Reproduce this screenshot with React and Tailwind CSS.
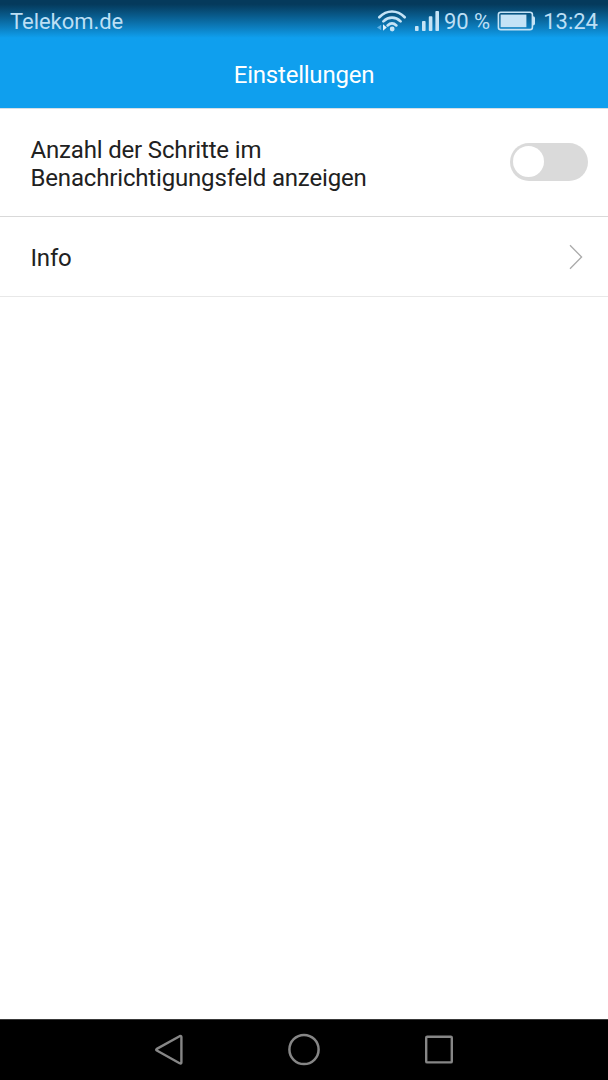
function WifiIcon() {
    return (
        <svg width="34" height="24" viewBox="0 0 34 24" fill="none">
            <g stroke="#c5e3f6" strokeWidth="2.7">
                <path d="M4.3 8.2C11.8 .6 22.2 .6 29.7 8.2" strokeLinecap="round" />
                <path d="M8.4 12.4C13.6 7.4 20.4 7.4 25.6 12.4" strokeLinecap="round" />
                <path d="M12.6 16.4C15.4 13.8 18.6 13.8 21.4 16.4" strokeLinecap="round" />
            </g>
            <circle cx="17.2" cy="20" r="2.4" fill="#c5e3f6" />
            <path d="M6.2 15.8V21.2L2 18.5Z" fill="#5fb0e2" />
            <path d="M8 15.2V21.8L11.8 18.5Z" fill="#e2f2fc" />
        </svg>
    );
}

function SignalIcon() {
    return (
        <svg width="24" height="20" viewBox="0 0 24 20" fill="#c5e3f6">
            <rect x="0" y="15" width="3.6" height="5" rx="0.8" />
            <rect x="7" y="10" width="3.6" height="10" rx="0.8" />
            <rect x="13.8" y="5.2" width="3.6" height="14.8" rx="0.8" />
            <rect x="20.4" y="0" width="3.6" height="20" rx="0.8" />
        </svg>
    );
}

function BatteryIcon() {
    return (
        <svg width="38" height="20" viewBox="0 0 38 20" fill="none">
            <rect x="1.4" y="1.2" width="34" height="17.4" rx="2.4" stroke="#c5e3f6" strokeWidth="1.6" />
            <rect x="3.6" y="3.6" width="25.8" height="12.6" fill="#c5e3f6" />
            <path d="M36 5.2Q38 5.4 38 7V12.6Q38 14.4 36 14.6Z" fill="#c5e3f6" />
        </svg>
    );
}

export function StatusBar() {
    return (
        <div className="flex h-[42px] items-center bg-linear-to-b from-[#053a5c] from-10% to-[#0f9fee] to-90% px-[10px] text-[22px] leading-none text-[#bcdff5]">
            <span className="pt-px tracking-[-0.05px]">Telekom.de</span>
            <div className="ml-auto flex items-center">
                <WifiIcon />
                <div className="ml-[6px]">
                    <SignalIcon />
                </div>
                <span className="ml-[5px] pt-px">90 %</span>
                <div className="ml-[7px]">
                    <BatteryIcon />
                </div>
                <span className="ml-[8px] pt-px">13:24</span>
            </div>
        </div>
    );
}

export function ToggleSwitch() {
    return (
        <button role="switch" aria-checked="false" className="flex h-[38px] w-[78px] items-center rounded-full bg-[#dadada] pl-[3px]">
            <span className="h-[31px] w-[31px] rounded-full bg-white"></span>
        </button>
    );
}

function BackIcon() {
    return (
        <svg width="30" height="34" viewBox="0 0 30 34" fill="none" stroke="#868686" strokeWidth="2.4" strokeLinejoin="round">
            <path d="M25.6 3.2Q27.4 2.4 27.4 4V29.4Q27.4 31 25.6 30.2L2.8 17.5Q1.6 16.7 2.8 15.9Z" />
        </svg>
    );
}

function HomeIcon() {
    return (
        <svg width="34" height="34" viewBox="0 0 34 34" fill="none" stroke="#868686" strokeWidth="2.5">
            <circle cx="17" cy="16.5" r="14.6" />
        </svg>
    );
}

function RecentIcon() {
    return (
        <svg width="30" height="30" viewBox="0 0 30 30" fill="none" stroke="#868686" strokeWidth="2.4">
            <rect x="2.2" y="1.8" width="25.6" height="25.6" rx="1" />
        </svg>
    );
}

export function NavBar() {
    return (
        <nav className="flex h-[61px] items-center border-t border-[#3a3a3a] bg-black pl-[154px]">
            <BackIcon />
            <div className="ml-[103px]">
                <HomeIcon />
            </div>
            <div className="ml-[103px]">
                <RecentIcon />
            </div>
        </nav>
    );
}

export default () => {
    return (
        <div className="flex h-screen flex-col bg-white font-[Roboto,sans-serif]">
            <header className="border-b border-[#d4dfe6] bg-[#0f9fee]">
                <StatusBar />
                <h1 className="h-[66px] pt-[19px] text-center text-[24px] leading-[28px] tracking-[-0.22px] text-white">Einstellungen</h1>
            </header>
            <main className="flex-1 text-[24px] leading-[27.5px] tracking-[-0.17px] text-[#212121]">
                <div className="flex h-[108px] items-center border-b border-[#d9d9d9] pl-[30.5px] pr-5">
                    <p className="w-[360px] pt-[4px]">Anzahl der Schritte im Benachrichtigungsfeld anzeigen</p>
                    <div className="ml-auto pb-[2px]">
                        <ToggleSwitch />
                    </div>
                </div>
                <div className="flex h-20 items-center border-b border-[#e8e8e8] pl-[30.5px] pr-[25px]">
                    <p className="pt-[4px]">Info</p>
                    <svg className="ml-auto" width="14" height="26" viewBox="0 0 14 26" fill="none" stroke="#aaaaaa" strokeWidth="1.3">
                        <path d="M1 1.2L12.6 13L1 24.8" />
                    </svg>
                </div>
            </main>
            <NavBar />
        </div>
    );
};
